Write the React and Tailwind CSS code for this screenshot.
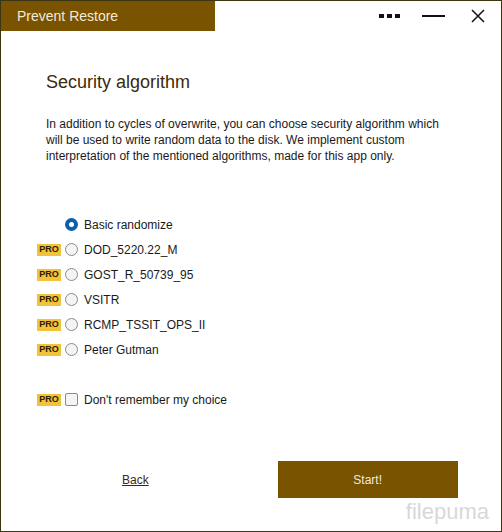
// Prevent Restore – security algorithm step
const algorithms = [
  { name: 'Basic randomize', pro: false, checked: true },
  { name: 'DOD_5220.22_M', pro: true },
  { name: 'GOST_R_50739_95', pro: true },
  { name: 'VSITR', pro: true },
  { name: 'RCMP_TSSIT_OPS_II', pro: true },
  { name: 'Peter Gutman', pro: true },
];

const Pro = ({ show }) => (
  <span
    className={`w-[24px] h-[12px] mr-[4px] flex items-center justify-center text-[9px] font-bold leading-none text-[#2a2000] ${
      show ? 'bg-[#f2c23a]' : 'invisible'
    }`}
  >
    PRO
  </span>
);

const Radio = ({ checked }) =>
  checked ? (
    <span className="w-[13px] h-[13px] rounded-full bg-[#0a5fb0] flex items-center justify-center">
      <span className="w-[5px] h-[5px] rounded-full bg-white" />
    </span>
  ) : (
    <span className="w-[13px] h-[13px] rounded-full border border-[#8a8a8a] bg-[#f4f4f4]" />
  );

export default function App() {
  return (
    <div
      className="w-[502px] h-[532px] bg-white border border-[#3a3512] flex flex-col relative overflow-hidden"
      style={{ fontFamily: '"Liberation Sans", Arial, sans-serif' }}
    >
      {/* Title bar */}
      <div className="h-[30px] flex items-start">
        <div className="w-[214px] h-[30px] bg-[#7a5300] text-[#f3ead6] text-[14px] pl-[16px] pt-[7px] leading-[16px]">
          Prevent Restore
        </div>
        <div className="flex-1 flex items-center justify-end h-[30px] pr-[16px]">
          <div className="flex gap-[3px] mr-[22px]">
            <span className="w-[5px] h-[4px] bg-[#111]" />
            <span className="w-[5px] h-[4px] bg-[#111]" />
            <span className="w-[5px] h-[4px] bg-[#111]" />
          </div>
          <span className="w-[23px] h-[2px] bg-[#111] mr-[26px]" />
          <svg width="14" height="14" viewBox="0 0 14 14" className="mt-[-1px]">
            <path d="M1 1 L13 13 M13 1 L1 13" stroke="#111" strokeWidth="1.5" fill="none" />
          </svg>
        </div>
      </div>

      {/* Content */}
      <div className="flex-1 flex flex-col pl-[45px] pr-[30px] pt-[40px]">
        <h1 className="text-[18px] leading-[22px] text-[#3b2a0c]">Security algorithm</h1>
        <p className="mt-[23px] text-[12px] leading-[16px] text-[#1a1a1a] pr-[19px]">
          In addition to cycles of overwrite, you can choose security algorithm which will be used to write random data to
          the disk. We implement custom interpretation of the mentioned algorithms, made for this app only.
        </p>

        <div className="mt-[48px] ml-[-9px] flex flex-col">
          {algorithms.map((a) => (
            <div key={a.name} className="h-[25px] flex items-center">
              <Pro show={a.pro} />
              <Radio checked={a.checked} />
              <span className="ml-[6px] text-[12px] text-[#1a1a1a]">{a.name}</span>
            </div>
          ))}
        </div>

        <div className="mt-[25px] ml-[-9px] h-[25px] flex items-center">
          <Pro show />
          <span className="w-[13px] h-[13px] rounded-[2px] border border-[#8a8a8a] bg-[#f4f4f4]" />
          <span className="ml-[6px] text-[12px] text-[#1a1a1a]">Don't remember my choice</span>
        </div>

        <div className="mt-[49px] flex items-center">
          <span className="ml-[76px] text-[12px] text-[#3b2a0c] underline">Back</span>
          <button className="ml-[129px] w-[180px] h-[37px] shrink-0 bg-[#7a5300] text-[12px] text-[#f3ead6]">
            Start!
          </button>
        </div>
      </div>

      <span className="absolute right-[12px] bottom-[8px] text-[22px] text-[#d8d8d8] leading-none">filepuma</span>
    </div>
  );
}
